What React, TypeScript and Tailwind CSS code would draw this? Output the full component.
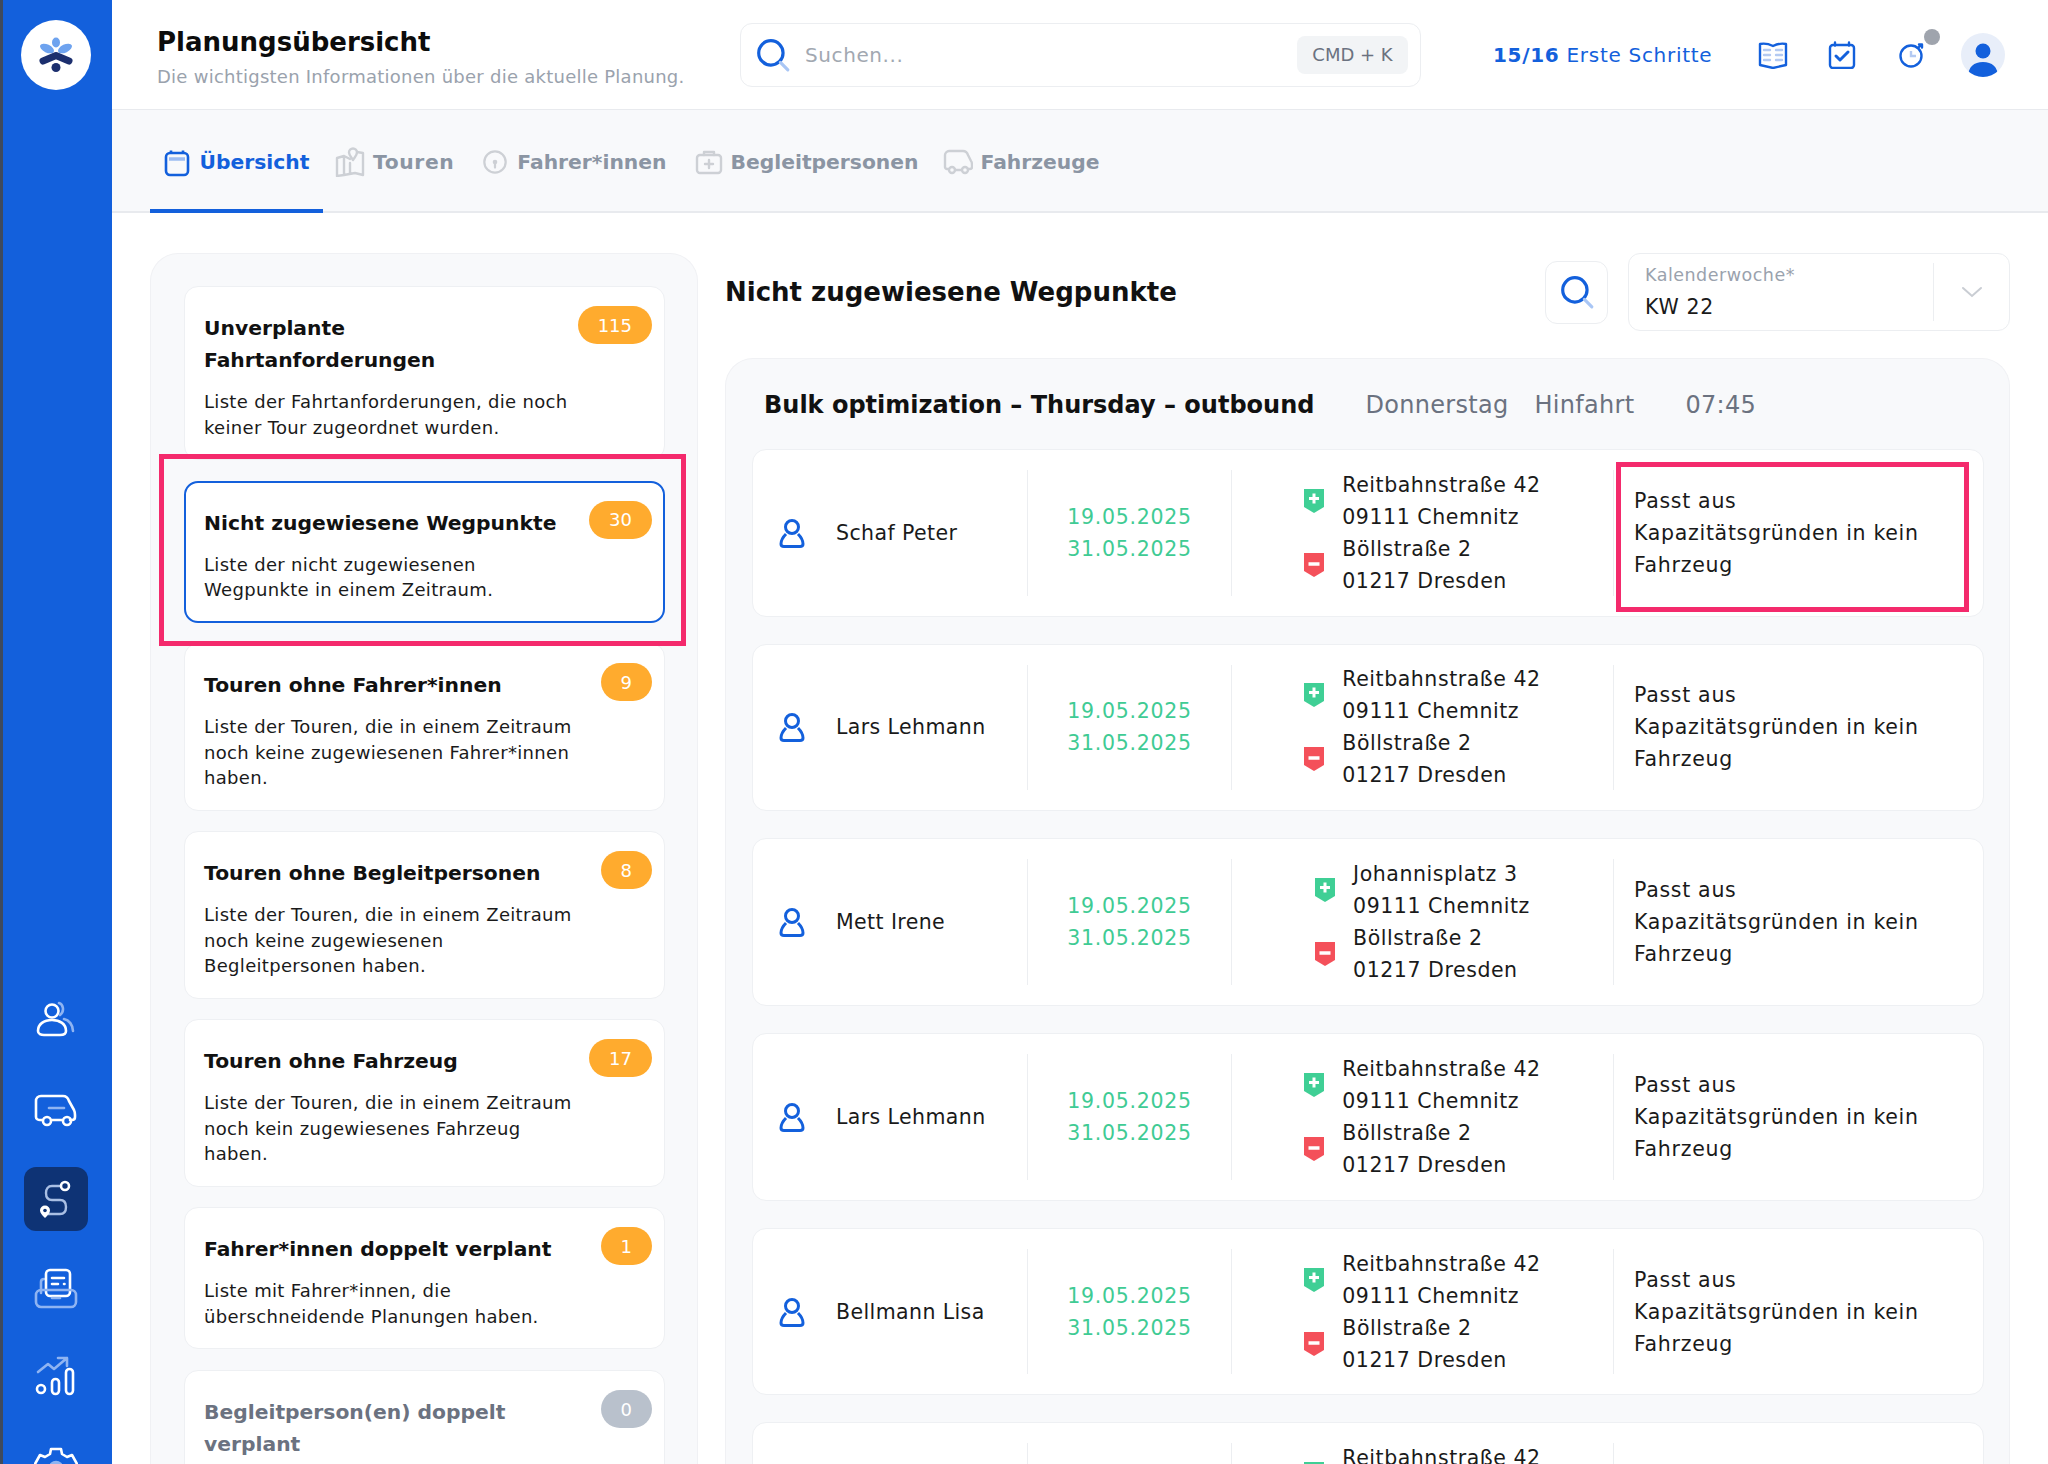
import React from 'react'

const font = { fontFamily: '"DejaVu Sans", sans-serif' }

const cards = [
  { title: 'Unverplante\nFahrtanforderungen', text: 'Liste der Fahrtanforderungen, die noch\nkeiner Tour zugeordnet wurden.', count: '115' },
  { title: 'Nicht zugewiesene Wegpunkte', text: 'Liste der nicht zugewiesenen\nWegpunkte in einem Zeitraum.', count: '30', active: true },
  { title: 'Touren ohne Fahrer*innen', text: 'Liste der Touren, die in einem Zeitraum\nnoch keine zugewiesenen Fahrer*innen\nhaben.', count: '9' },
  { title: 'Touren ohne Begleitpersonen', text: 'Liste der Touren, die in einem Zeitraum\nnoch keine zugewiesenen\nBegleitpersonen haben.', count: '8' },
  { title: 'Touren ohne Fahrzeug', text: 'Liste der Touren, die in einem Zeitraum\nnoch kein zugewiesenes Fahrzeug\nhaben.', count: '17' },
  { title: 'Fahrer*innen doppelt verplant', text: 'Liste mit Fahrer*innen, die\nüberschneidende Planungen haben.', count: '1' },
  { title: 'Begleitperson(en) doppelt\nverplant', text: '', count: '0', muted: true },
]

const rows = [
  { name: 'Schaf Peter', from: 'Reitbahnstraße 42' },
  { name: 'Lars Lehmann', from: 'Reitbahnstraße 42' },
  { name: 'Mett Irene', from: 'Johannisplatz 3' },
  { name: 'Lars Lehmann', from: 'Reitbahnstraße 42' },
  { name: 'Bellmann Lisa', from: 'Reitbahnstraße 42' },
  { name: 'Lars Lehmann', from: 'Reitbahnstraße 42' },
]

function SearchIcon({ className }: { className?: string }) {
  return (
    <svg viewBox="0 0 34 34" fill="none" className={className}>
      <circle cx="15" cy="15" r="11.5" stroke="#1360dc" strokeWidth="3" />
      <path d="M24 24l7 7" stroke="#a9c6f5" strokeWidth="3" strokeLinecap="round" />
    </svg>
  )
}

function Logo() {
  return (
    <svg viewBox="0 0 70 70" className="h-[70px] w-[70px]">
      <circle cx="35" cy="35" r="35" fill="#fff" />
      <ellipse cx="35" cy="22.500" rx="4" ry="5" fill="#6ea3ef" />
      <ellipse cx="26" cy="28.500" rx="7.500" ry="4" transform="rotate(25 26 28.500)" fill="#6ea3ef" />
      <ellipse cx="44" cy="28.500" rx="7.500" ry="4" transform="rotate(-25 44 28.500)" fill="#6ea3ef" />
      <path d="M22 41l13-5.500L48 41" fill="none" stroke="#1c2f6e" strokeWidth="7" strokeLinecap="round" strokeLinejoin="round" />
      <circle cx="35" cy="47.500" r="4.500" fill="#1c2f6e" />
    </svg>
  )
}

function NavIcon({ kind }: { kind: string }) {
  const white = { stroke: '#fff', strokeWidth: 2.6, fill: 'none', strokeLinecap: 'round' as const, strokeLinejoin: 'round' as const }
  const soft = { ...white, stroke: '#8fb4f2' }
  if (kind === 'people')
    return (
      <svg viewBox="0 0 44 44" className="h-11 w-11">
        <circle cx="18" cy="13" r="6.500" {...white} />
        <path d="M4 33c0-7 6-11 14-11s14 4 14 11c0 3-3 4-6 4H10c-3 0-6-1-6-4z" {...white} />
        <path d="M25 5c4 1 6 8 1 12M30 21c5 1 9 6 9 12" {...soft} />
      </svg>
    )
  if (kind === 'van')
    return (
      <svg viewBox="0 0 44 44" className="h-11 w-11">
        <path d="M8 32H6c-2 0-4-1-4-3V13c0-3 2-5 5-5h22c3 0 5 2 6 5l5 9c1 2 1 3 1 5v2c0 2-1 3-3 3h-2M18 32h10" {...white} />
        <circle cx="13" cy="33" r="4" {...white} />
        <circle cx="33" cy="33" r="4" {...white} />
        <path d="M15 20h15" {...soft} />
      </svg>
    )
  if (kind === 'route')
    return (
      <svg viewBox="0 0 44 44" className="h-11 w-11">
        <path d="M27 9H18c-4 0-6 3-6 7s2 7 6 7h8c4 0 6 3 6 7s-2 7-6 7H14" stroke="#a9bfe4" strokeWidth="2.400" fill="none" />
        <circle cx="31" cy="9" r="4" fill="#0e3375" {...white} />
        <path d="M11 41c-3-3-5-5-5-7.500a5 5 0 0110 0C16 36 14 38 11 41z" fill="#fff" />
        <circle cx="11" cy="33.500" r="1.800" fill="#0e3375" />
      </svg>
    )
  if (kind === 'desk')
    return (
      <svg viewBox="0 0 44 44" className="h-11 w-11">
        <path d="M7 26V15c0-2 1-3 3-3" {...soft} />
        <rect x="12" y="3" width="24" height="26" rx="4" {...white} />
        <path d="M18 11h12M18 17h6M30 17h.5" {...white} />
        <rect x="2" y="23" width="40" height="17" rx="5" fill="#1360dc" {...soft} />
        <path d="M18 31h8" {...soft} />
      </svg>
    )
  if (kind === 'chart')
    return (
      <svg viewBox="0 0 44 44" className="h-11 w-11">
        <path d="M4 16l10-8 6 5L33 2M24 2h9v8" {...soft} />
        <circle cx="7" cy="33" r="4" {...white} />
        <rect x="18" y="23" width="7" height="15" rx="3.500" {...white} />
        <rect x="32" y="13" width="7" height="25" rx="3.500" {...white} />
      </svg>
    )
  return (
    <svg viewBox="0 0 44 44" className="h-11 w-11">
      <path d="M17 3h10l1 5 5 3 5-2 5 9-4 3v6l4 3-5 9-5-2-5 3-1 5H17l-1-5-5-3-5 2-5-9 4-3v-6l-4-3 5-9 5 2 5-3z" {...white} />
      <circle cx="22" cy="22" r="6" {...soft} fill="#8fb4f2" />
    </svg>
  )
}

function Sidebar() {
  const items = ['people', 'van', 'route', 'desk', 'chart', 'gear']
  return (
    <aside className="flex h-full w-[112px] shrink-0 flex-col items-center border-l-[3px] border-[#3f4a5c] bg-[#1360dc] pr-[3px]">
      <div className="mt-5">
        <Logo />
      </div>
      <div className="mt-5 h-px w-[72px] bg-[#0d3f96]" />
      <div className="mt-[878px] flex flex-col items-center gap-[25.500px]">
        {items.map((item) => (
          <div
            key={item}
            className={`flex h-16 w-16 items-center justify-center rounded-xl ${item === 'route' ? 'bg-[#0e3375]' : ''}`}
          >
            <NavIcon kind={item} />
          </div>
        ))}
      </div>
    </aside>
  )
}

function TopIcons() {
  const s = { stroke: '#1360dc', strokeWidth: 2.4, fill: 'none', strokeLinecap: 'round' as const, strokeLinejoin: 'round' as const }
  return (
    <div className="ml-[46px] flex items-center">
      <svg viewBox="0 0 30 28" className="h-7 w-[30px]">
        <path d="M2 3c5-1 9 0 13 2 4-2 8-3 13-2v21l-13 3-13-3z" {...s} />
        <path d="M6 9h6M6 14h6M6 19h6M18 9h6M18 14h6M18 19h6" stroke="#b4caf2" strokeWidth="2.400" strokeLinecap="round" />
      </svg>
      <svg viewBox="0 0 28 28" className="ml-10 h-7 w-7">
        <rect x="2" y="4" width="24" height="23" rx="3" {...s} />
        <path d="M7 1.500v3M21 1.500v3" {...s} />
        <path d="M8 15l4 4 8-8" {...s} strokeWidth={3} />
      </svg>
      <div className="relative ml-[42px]">
        <svg viewBox="0 0 28 28" className="h-7 w-7">
          <circle cx="13" cy="15" r="10.500" {...s} />
          <path d="M20 7l3-3M21 3.500h3v3" {...s} />
          <path d="M13 10v5h5" stroke="#b4caf2" strokeWidth="2.400" fill="none" />
        </svg>
        <div className="absolute left-[26px] top-[-12px] h-4 w-4 rounded-full bg-[#9fa4ad]" />
      </div>
      <div className="ml-[35px] flex h-[44px] w-[44px] items-end justify-center overflow-hidden rounded-full bg-[#e8eef9]">
        <svg viewBox="0 0 44 44" className="h-11 w-11">
          <circle cx="22" cy="18" r="7.500" fill="#1360dc" />
          <path d="M7 44c0-10 6-15 15-15s15 5 15 15z" fill="#1360dc" />
        </svg>
      </div>
    </div>
  )
}

function Header() {
  return (
    <header className="flex h-[110px] shrink-0 items-center border-b border-[#e8eaee] bg-white pl-[45px]">
      <div className="w-[583px] shrink-0 pt-[5px]">
        <div className="text-[26px] font-bold leading-8 text-[#0c0c0c]">Planungsübersicht</div>
        <div className="mt-[7px] text-[18px] leading-6 tracking-[0.25px] text-[#9aa2ad]">Die wichtigsten Informationen über die aktuelle Planung.</div>
      </div>
      <div className="flex h-16 w-[681px] shrink-0 items-center rounded-xl border border-[#eceef1] pl-[14px] pr-3">
        <SearchIcon className="h-9 w-9" />
        <span className="ml-[14px] flex-1 text-[20px] tracking-[0.6px] text-[#a2a8b1]">Suchen...</span>
        <span className="flex h-[38px] w-[111px] items-center justify-center rounded-lg bg-[#f2f4f6] text-[18px] text-[#6b7280]">CMD + K</span>
      </div>
      <div className="ml-[72px] whitespace-nowrap text-[20px] tracking-[0.7px] text-[#1360dc]">
        <span className="font-bold">15/16</span> Erste Schritte
      </div>
      <TopIcons />
    </header>
  )
}

function TabIcon({ kind, active }: { kind: string; active?: boolean }) {
  const g = { stroke: '#cdd0d5', strokeWidth: 2.4, fill: 'none', strokeLinecap: 'round' as const, strokeLinejoin: 'round' as const }
  if (active)
    return (
      <svg viewBox="0 0 26 28" className="h-7 w-[26px]">
        <rect x="2" y="4" width="22" height="22" rx="4" fill="none" stroke="#1360dc" strokeWidth="2.600" />
        <path d="M7 1.500v3M19 1.500v3" stroke="#1360dc" strokeWidth="2.600" />
        <path d="M5 10h16" stroke="#9dbcf2" strokeWidth="3.500" />
      </svg>
    )
  if (kind === 'map')
    return (
      <svg viewBox="0 0 30 30" className="h-[30px] w-[30px]">
        <path d="M2 11l7-2v19l-7 1zM9 9l6 3M9 28l11-2 8 2V6l-6-1M15 16v10" {...g} />
        <path d="M18 13c-2-3-4-5-4-7.500a4 4 0 018 0C22 8 20 10 18 13z" {...g} />
      </svg>
    )
  if (kind === 'wheel')
    return (
      <svg viewBox="0 0 28 28" className="h-[26px] w-[26px]">
        <circle cx="14" cy="14" r="11.500" {...g} />
        <circle cx="14" cy="14" r="2.500" fill="#cdd0d5" />
        <path d="M14 16v4" {...g} />
      </svg>
    )
  if (kind === 'kit')
    return (
      <svg viewBox="0 0 28 28" className="h-7 w-7">
        <rect x="2" y="7" width="24" height="18" rx="3" {...g} />
        <path d="M9 7V4h10v3M14 12v8M10 16h8" {...g} />
      </svg>
    )
  return (
    <svg viewBox="0 0 30 28" className="h-7 w-[30px]">
      <path d="M5 21H4c-1 0-2-1-2-2V7c0-2 2-4 4-4h14c2 0 4 1 5 4l3 6c1 1 1 2 1 4v2c0 1-1 2-2 2h-2M12 22h6" {...g} />
      <circle cx="9" cy="22" r="3" {...g} />
      <circle cx="22" cy="22" r="3" {...g} />
    </svg>
  )
}

function Tabs() {
  const tabs = [
    { label: 'Touren', kind: 'map', cls: 'ml-[12px] gap-2', text: 'tracking-[0.6px]' },
    { label: 'Fahrer*innen', kind: 'wheel', cls: 'ml-[28px] gap-[9px]', text: '' },
    { label: 'Begleitpersonen', kind: 'kit', cls: 'ml-[28px] gap-2', text: '' },
    { label: 'Fahrzeuge', kind: 'van', cls: 'ml-[24px] gap-2', text: '' },
  ]
  return (
    <nav className="flex h-[103px] shrink-0 items-stretch border-b-2 border-[#e8eaee] bg-[#f8f9fb] pl-[38px]">
      <div className="-mb-[2px] flex w-[173px] items-center justify-center gap-[10px] border-b-4 border-[#1360dc] pt-[6px]">
        <TabIcon kind="cal" active />
        <span className="text-[20.300px] font-bold text-[#1360dc]">Übersicht</span>
      </div>
      {tabs.map((tab) => (
        <div key={tab.label} className={`flex items-center pt-[3px] ${tab.cls}`}>
          <TabIcon kind={tab.kind} />
          <span className={`text-[20.300px] font-bold text-[#8b95a3] ${tab.text}`}>{tab.label}</span>
        </div>
      ))}
    </nav>
  )
}

function Card({ title, text, count, active, muted }: (typeof cards)[number]) {
  return (
    <div
      className={`relative shrink-0 rounded-[14px] bg-white ${active ? 'border-2 border-[#1360dc] pb-[18px] pl-[18px] pt-6' : 'border border-[#eef0f3] pb-[19px] pl-[19px] pt-[25px]'}`}
    >
      <div className={`whitespace-pre-line text-[20.300px] font-bold leading-8 ${muted ? 'text-[#6b7280]' : 'text-[#111]'}`}>{title}</div>
      {text && <div className="mt-[13px] whitespace-pre-line text-[18px] leading-[25.500px] tracking-[0.32px] text-[#1a1a1a]">{text}</div>}
      <span
        className={`absolute flex h-[38px] min-w-[50px] items-center justify-center rounded-full px-5 text-[18px] text-white ${active ? 'right-[11px] top-[18px]' : 'right-3 top-[19px]'} ${muted ? 'bg-[#b9c1cc]' : 'bg-[#ffab2e]'}`}
      >
        {count}
      </span>
    </div>
  )
}

function Pin({ plus }: { plus?: boolean }) {
  return (
    <svg viewBox="0 0 20 24" className="h-6 w-5 shrink-0">
      <path d="M0 0h20v18l-10 6-10-6z" fill={plus ? '#3fcf95' : '#f4505a'} />
      {plus ? <path d="M10 4.500v10M5 9.500h10" stroke="#fff" strokeWidth="3" /> : <path d="M4.500 11h11" stroke="#fff" strokeWidth="3.500" />}
    </svg>
  )
}

function Row({ name, from }: (typeof rows)[number]) {
  return (
    <div className="flex h-[167.500px] shrink-0 rounded-[14px] border border-[#eef0f3] bg-white text-[20.500px] leading-8 tracking-[0.7px] text-[#1a1a1a]">
      <div className="flex w-[274px] shrink-0 items-center pl-[26px]">
        <svg viewBox="0 0 26 30" fill="none" className="h-[30px] w-[26px]">
          <circle cx="13" cy="9" r="6.500" stroke="#1360dc" strokeWidth="3" />
          <path d="M7 16c-3 3-5 7-5 10 0 2 1 2.500 3 2.500h16c2 0 3-.5 3-2.500 0-3-2-7-5-10" stroke="#1360dc" strokeWidth="3" />
        </svg>
        <span className="ml-[31px] tracking-[0.4px]">{name}</span>
      </div>
      <div className="my-5 flex w-[204px] shrink-0 items-center justify-center border-l border-[#eceef1] text-center text-[#3fcb94]">
        <div>
          19.05.2025
          <br />
          31.05.2025
        </div>
      </div>
      <div className="my-5 flex w-[382px] shrink-0 flex-col justify-center border-l border-[#eceef1] tracking-[0.55px]">
        <div className="mx-auto">
          <div className="flex items-center gap-[18px]">
            <Pin plus />
            <div>
              {from}
              <br />
              09111 Chemnitz
            </div>
          </div>
          <div className="flex items-center gap-[18px]">
            <Pin />
            <div>
              Böllstraße 2
              <br />
              01217 Dresden
            </div>
          </div>
        </div>
      </div>
      <div className="my-5 flex flex-1 items-center border-l border-[#eceef1] pl-5">
        <div>
          Passt aus
          <br />
          Kapazitätsgründen in kein
          <br />
          Fahrzeug
        </div>
      </div>
    </div>
  )
}

export default function App() {
  return (
    <div className="relative flex h-[1464px] w-[2048px] overflow-hidden bg-white" style={font}>
      <Sidebar />
      <main className="flex min-w-0 flex-1 flex-col">
        <Header />
        <Tabs />
        <div className="flex min-h-0 flex-1 gap-[27px] pl-[38px] pr-[38px] pt-10">
          <section className="flex w-[548px] shrink-0 flex-col gap-[20.600px] rounded-t-[28px] border border-b-0 border-[#f0f1f4] bg-[#f8f9fb] pl-[33px] pr-[32px] pt-[32px]">
            {cards.map((card) => (
              <Card key={card.title} {...card} />
            ))}
          </section>
          <section className="flex min-w-0 flex-1 flex-col">
            <div className="flex h-[78px] shrink-0 items-center">
              <h2 className="flex-1 pt-px text-[26px] font-bold text-[#111]">Nicht zugewiesene Wegpunkte</h2>
              <div className="flex h-[63px] w-[63px] items-center justify-center rounded-xl border border-[#eceef1]">
                <SearchIcon className="h-9 w-9" />
              </div>
              <div className="ml-5 flex h-[78px] w-[382px] items-center rounded-xl border border-[#eceef1]">
                <div className="flex-1 pl-4">
                  <div className="text-[17.500px] leading-6 tracking-[0.5px] text-[#9aa2ad]">Kalenderwoche*</div>
                  <div className="mt-[6px] text-[20.500px] leading-7 tracking-[0.7px] text-[#1a1a1a]">KW 22</div>
                </div>
                <div className="flex h-[58px] w-[76px] items-center justify-center border-l border-[#eceef1]">
                  <svg viewBox="0 0 22 12" fill="none" className="h-3 w-[22px]">
                    <path d="M2 2l9 8 9-8" stroke="#c9cdd3" strokeWidth="2" strokeLinecap="round" />
                  </svg>
                </div>
              </div>
            </div>
            <div className="mt-[27px] flex min-h-0 flex-1 flex-col gap-[27.200px] rounded-t-[28px] border border-b-0 border-[#f0f1f4] bg-[#f8f9fb] pl-[26px] pr-[25px]">
              <div className="-mb-[27.200px] flex h-[90px] shrink-0 items-center pl-3 pt-px text-[24px]">
                <span className="font-bold text-[#111]">Bulk optimization – Thursday – outbound</span>
                <span className="ml-[51px] tracking-[0.3px] text-[#6b7280]">Donnerstag</span>
                <span className="ml-[26px] tracking-[0.3px] text-[#6b7280]">Hinfahrt</span>
                <span className="ml-[51px] tracking-[0.3px] text-[#6b7280]">07:45</span>
              </div>
              {rows.map((row, i) => (
                <Row key={i} {...row} />
              ))}
            </div>
          </section>
        </div>
      </main>
      {/* Hervorhebungen liegen über dem Inhalt */}
      <div className="absolute left-[159px] top-[454px] z-20 h-[192px] w-[527px] border-[5px] border-[#f42a6c]" />
      <div className="absolute left-[1616px] top-[462px] z-20 h-[150px] w-[353px] border-[5px] border-[#f42a6c]" />
    </div>
  )
}
